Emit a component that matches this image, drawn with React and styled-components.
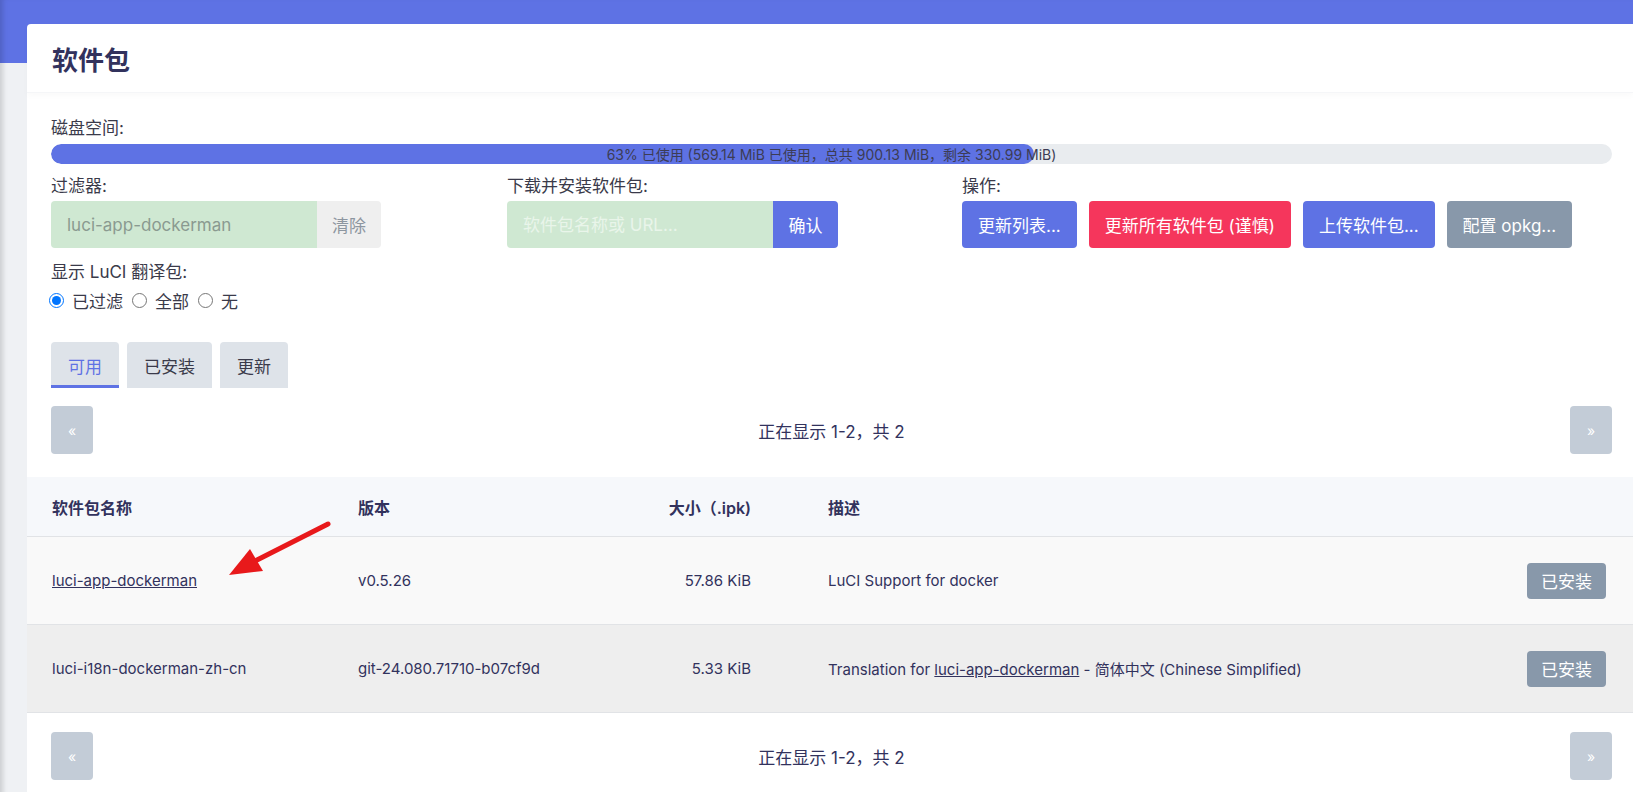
import React from "react";
import styled, { createGlobalStyle } from "styled-components";

const GlobalStyle = createGlobalStyle`
  html, body {
    margin: 0;
    padding: 0;
  }
  body {
    background: #eff1f4;
    font-family: Inter, "Noto Sans CJK SC", sans-serif;
    color: #32325d;
    overflow: hidden;
  }
`;

const Main = styled.div`
  min-height: 792px;
  box-sizing: border-box;
  padding: 24px 0 0 27px;
  background: linear-gradient(#5e72e4 0 63px, transparent 63px);
  box-shadow: inset 6px 0 5px -3px rgba(0, 0, 0, 0.14);
`;

const Card = styled.div`
  background: #fff;
  border-radius: 4px 0 0 0;
  padding-bottom: 20px;
`;

const Title = styled.h2`
  margin: 0;
  height: 68px;
  display: flex;
  align-items: center;
  padding-left: 25px;
  font-size: 26px;
  font-weight: 700;
  color: #32325d;
  border-bottom: 1px solid #f5f6f8;
  box-shadow: 0 3px 6px rgba(0, 0, 0, 0.025);
`;

const Body = styled.div`
  padding: 23px 21px 0 24px;
`;

const Label = styled.div`
  font-size: 17px;
  line-height: 24px;
  color: #3a3a4a;
  margin-bottom: ${(p) => p.$gap || 4}px;
`;

const Track = styled.div`
  position: relative;
  height: 20px;
  border-radius: 10px;
  background: #e9ecef;
  overflow: hidden;
`;

const Fill = styled.div`
  height: 100%;
  border-radius: 10px;
  background: #5e72e4;
`;

const TrackText = styled.span`
  position: absolute;
  inset: 0;
  display: flex;
  align-items: center;
  justify-content: center;
  font-size: 14px;
  color: #3c3c55;
`;

const Controls = styled.div`
  display: grid;
  grid-template-columns: 456px 455px 1fr;
  margin-top: 10px;
`;

const Group = styled.div`
  display: flex;
  height: 47px;
  width: ${(p) => p.$width}px;
`;

const TextInput = styled.input`
  flex: 1;
  min-width: 0;
  border: none;
  outline: none;
  background: #cfe8d2;
  border-radius: 4px 0 0 4px;
  padding: 0 16px;
  font-family: inherit;
  font-size: 17px;
  color: #8a9a90;
  &::placeholder {
    color: #e9f5ea;
  }
`;

const AddonButton = styled.button`
  border: none;
  border-radius: 0 4px 4px 0;
  width: ${(p) => p.$width}px;
  font-family: inherit;
  font-size: 17px;
  background: ${(p) => (p.$primary ? "#5e72e4" : "#efefef")};
  color: ${(p) => (p.$primary ? "#fff" : "#8d96a0")};
`;

const Actions = styled.div`
  display: flex;
  gap: 12px;
`;

const colors = {
  primary: "#5e72e4",
  danger: "#f5365c",
  neutral: "#8898aa",
};

const ActionButton = styled.button`
  height: 47px;
  padding: 0 16px;
  border: none;
  border-radius: 4px;
  background: ${(p) => colors[p.$kind]};
  color: #fff;
  font-family: inherit;
  font-size: 17px;
`;

const LangBlock = styled.div`
  margin-top: 12px;
`;

const Radios = styled.div`
  display: flex;
  align-items: center;
  height: 24px;
  font-size: 17px;
  color: #3a3a4a;
  margin-left: -7px;
`;

const RadioLabel = styled.label`
  display: flex;
  align-items: center;
  margin-right: 4px;
  input {
    margin: 0 8px 0 5px;
    width: 15px;
    height: 15px;
  }
`;

const Tabs = styled.div`
  display: flex;
  gap: 8px;
  margin-top: 30px;
`;

const Tab = styled.div`
  height: 46px;
  box-sizing: border-box;
  padding: 3px 17px 0;
  display: flex;
  align-items: center;
  font-size: 17px;
  background: #dee3e9;
  border-radius: 4px 4px 0 0;
  color: ${(p) => (p.$active ? "#5e72e4" : "#3a3a4a")};
  border-bottom: 3px solid ${(p) => (p.$active ? "#5e72e4" : "transparent")};
`;

const Pager = styled.div`
  display: flex;
  align-items: center;
  justify-content: space-between;
  margin: ${(p) => p.$margin};
  padding: 0 21px 0 24px;
`;

const PageButton = styled.button`
  width: 42px;
  height: 48px;
  border: none;
  border-radius: 4px;
  background: #c3ccd7;
  color: #fff;
  font-size: 14px;
  font-family: inherit;
`;

const PageInfo = styled.span`
  font-size: 17px;
  color: #32325d;
`;

const Table = styled.div`
  position: relative;
`;

const Row = styled.div`
  display: grid;
  grid-template-columns: 306px 243px 150px 1fr auto;
  align-items: center;
  padding: 0 27px 0 25px;
  height: ${(p) => (p.$head ? 59 : 87)}px;
  background: ${(p) => p.$bg};
  border-bottom: 1px solid #e1e3e6;
  font-size: ${(p) => (p.$head ? 16 : 15)}px;
  font-weight: ${(p) => (p.$head ? 600 : 400)};
  color: #32325d;
`;

const Size = styled.span`
  text-align: right;
`;

const Desc = styled.span`
  padding-left: 77px;
`;

const PkgLink = styled.a`
  color: #32325d;
  text-decoration: underline;
`;

const InstalledButton = styled.button`
  width: 79px;
  height: 36px;
  border: none;
  border-radius: 4px;
  background: #8898aa;
  color: #fff;
  font-family: inherit;
  font-size: 17px;
`;

const Pointer = styled.svg`
  position: absolute;
  left: 190px;
  top: 35px;
  pointer-events: none;
`;

const used = 63;

const packages = [
  {
    name: "luci-app-dockerman",
    link: true,
    version: "v0.5.26",
    size: "57.86 KiB",
    desc: "LuCI Support for docker",
    bg: "#f9f9f9",
  },
  {
    name: "luci-i18n-dockerman-zh-cn",
    version: "git-24.080.71710-b07cf9d",
    size: "5.33 KiB",
    desc: (
      <>
        Translation for <PkgLink>luci-app-dockerman</PkgLink> - 简体中文 (Chinese
        Simplified)
      </>
    ),
    bg: "#eeeeee",
  },
];

function Pagination({ margin }) {
  return (
    <Pager $margin={margin}>
      <PageButton>«</PageButton>
      <PageInfo>正在显示 1-2，共 2</PageInfo>
      <PageButton>»</PageButton>
    </Pager>
  );
}

export default function App() {
  return (
    <>
      <GlobalStyle />
      <Main>
        <Card>
          <Title>软件包</Title>
          <Body>
            <Label>磁盘空间:</Label>
            <Track>
              <Fill style={{ width: `${used}%` }} />
              <TrackText>
                63% 已使用 (569.14 MiB 已使用，总共 900.13 MiB，剩余 330.99 MiB)
              </TrackText>
            </Track>

            <Controls>
              <div>
                <Label $gap={3}>过滤器:</Label>
                <Group $width={330}>
                  <TextInput defaultValue="luci-app-dockerman" />
                  <AddonButton $width={64}>清除</AddonButton>
                </Group>
              </div>
              <div>
                <Label $gap={3}>下载并安装软件包:</Label>
                <Group $width={331}>
                  <TextInput placeholder="软件包名称或 URL…" />
                  <AddonButton $width={65} $primary>
                    确认
                  </AddonButton>
                </Group>
              </div>
              <div>
                <Label $gap={3}>操作:</Label>
                <Actions>
                  <ActionButton $kind="primary">更新列表...</ActionButton>
                  <ActionButton $kind="danger">更新所有软件包 (谨慎)</ActionButton>
                  <ActionButton $kind="primary">上传软件包...</ActionButton>
                  <ActionButton $kind="neutral">配置 opkg...</ActionButton>
                </Actions>
              </div>
            </Controls>

            <LangBlock>
              <Label>显示 LuCI 翻译包:</Label>
              <Radios>
                <RadioLabel>
                  <input type="radio" name="i18n" defaultChecked />
                  已过滤
                </RadioLabel>
                <RadioLabel>
                  <input type="radio" name="i18n" />
                  全部
                </RadioLabel>
                <RadioLabel>
                  <input type="radio" name="i18n" />
                  无
                </RadioLabel>
              </Radios>
            </LangBlock>

            <Tabs>
              <Tab $active>可用</Tab>
              <Tab>已安装</Tab>
              <Tab>更新</Tab>
            </Tabs>
          </Body>

          <Pagination margin="18px 0 23px" />

          <Table>
            <Row $head $bg="#f6f8fb">
              <span>软件包名称</span>
              <span>版本</span>
              <Size>大小（.ipk)</Size>
              <Desc>描述</Desc>
              <span />
            </Row>
            {packages.map((p) => (
              <Row key={p.name} $bg={p.bg}>
                <span>{p.link ? <PkgLink>{p.name}</PkgLink> : p.name}</span>
                <span>{p.version}</span>
                <Size>{p.size}</Size>
                <Desc>{p.desc}</Desc>
                <InstalledButton>已安装</InstalledButton>
              </Row>
            ))}
            <Pointer width="130" height="75" viewBox="0 0 130 75">
              <line
                x1="111"
                y1="12"
                x2="40"
                y2="48"
                stroke="#e8191b"
                strokeWidth="5"
                strokeLinecap="round"
              />
              <polygon points="12,63 46,59 33,37" fill="#e8191b" />
            </Pointer>
          </Table>

          <Pagination margin="19px 0 0" />
        </Card>
      </Main>
    </>
  );
}
